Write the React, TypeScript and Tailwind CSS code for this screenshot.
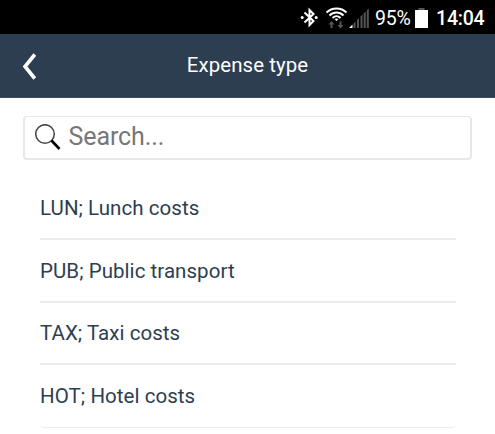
import { useState } from 'react';

interface ExpenseType {
  code: string;
  name: string;
  rowClass: string;
}

const expenseTypes: ExpenseType[] = [
  { code: 'LUN', name: 'Lunch costs', rowClass: 'h-[63px] border-b-2 pt-px' },
  { code: 'PUB', name: 'Public transport', rowClass: 'h-[63px] border-b-2 pt-px' },
  { code: 'TAX', name: 'Taxi costs', rowClass: 'h-[62px] border-b-2' },
  { code: 'HOT', name: 'Hotel costs', rowClass: 'h-[63px] border-b rounded-b-sm' },
];

function StatusBar() {
  return (
    <div className="flex h-[34px] items-center bg-black pt-[2px] pl-[300px] text-white">
      <svg className="h-[22px] w-[19px] shrink-0" viewBox="0 0 19 22" fill="none" stroke="white" strokeWidth="2">
        <path d="M4.5 5.5L13.5 14L9.5 18V3L13.5 7L4.5 15.5" />
        <circle cx="2.2" cy="10.5" r="1.5" fill="white" stroke="none" />
        <circle cx="16.2" cy="10.5" r="1.5" fill="white" stroke="none" />
      </svg>
      <svg className="ml-[6px] h-[24px] w-[23px] shrink-0" viewBox="0 0 23 24" fill="none">
        <path d="M1.5 6.5C7 1 16 1 21.5 6.5" stroke="white" strokeWidth="2" />
        <path d="M4.5 9.5C8.5 5.5 14.5 5.5 18.5 9.5" stroke="white" strokeWidth="2" />
        <path d="M7.5 12C10 9.5 13 9.5 15.5 12" stroke="white" strokeWidth="2" />
        <path d="M9.5 13Q11.5 11.8 13.5 13L11.5 15Z" fill="white" />
        <path d="M6.5 22V17M15.5 15.5V20" stroke="#555" strokeWidth="2" />
        <path d="M3.5 18.5L6.5 15L9.5 18.5ZM12.5 19L15.5 22.5L18.5 19Z" fill="#555" />
      </svg>
      <svg className="ml-[1px] h-[22px] w-[20px] shrink-0" viewBox="0 0 20 22">
        <path d="M0 21L3.5 17.5V21Z" fill="white" />
        <path d="M4.5 21V16.5L6.5 14.5V21ZM8 21V13L10 11V21ZM11.5 21V9.5L13.5 7.5V21ZM14.7 21V6.5L16.7 4.5V21ZM17.8 21V3.5L19.8 1.5V21Z" fill="#555" />
      </svg>
      <span className="ml-[6px] w-[36px] pt-px text-[19.5px] leading-6 tracking-[-0.2px] whitespace-nowrap">95%</span>
      <svg className="ml-[4px] h-[20px] w-[13px] shrink-0" viewBox="0 0 13 20">
        <path d="M3.5 0H9.5V2H3.5Z" fill="#555" />
        <path d="M0 2H13V20H0Z" fill="white" />
      </svg>
      <span className="ml-[8px] pt-px text-[19.5px] leading-6 font-medium tracking-[-0.2px] whitespace-nowrap">14:04</span>
    </div>
  );
}

export default function App() {
  const [query, setQuery] = useState('');

  const visibleTypes = expenseTypes.filter((type) =>
    `${type.code}; ${type.name}`.toLowerCase().includes(query.toLowerCase())
  );

  return (
    <div className="h-[434px] w-[495px] overflow-hidden bg-white font-['Roboto',sans-serif] text-[#2d3e50]">
      <StatusBar />

      <header className="grid h-16 grid-cols-[60px_1fr_60px] items-center border-b border-[#3d4c5e] bg-[#2d3e50] text-white">
        <button className="pl-[22px]" aria-label="Back">
          <svg className="h-[30px] w-[16px]" viewBox="0 0 16 30" fill="none" stroke="white" strokeWidth="3.6">
            <path d="M12.8 3.5L3 15.5L12.8 27.5" />
          </svg>
        </button>
        <h1 className="pb-px text-center text-[20.4px] tracking-[0.1px]">Expense type</h1>
      </header>

      <label className="mt-[18px] mr-[23px] ml-[23px] flex h-[44px] items-center rounded border-2 border-t border-[#e8e8e8] pl-[10px]">
        <svg className="h-[27px] w-[26px] shrink-0" viewBox="0 0 26 27" fill="none">
          <circle cx="10" cy="10" r="9.3" stroke="#444" strokeWidth="1.5" />
          <path d="M16.5 16.5L24.5 25" stroke="black" strokeWidth="2.6" />
        </svg>
        <input
          className="ml-[7.5px] w-full pb-px text-[25px] leading-8 tracking-[-0.1px] outline-none placeholder:text-[#777]"
          placeholder="Search..."
          value={query}
          onChange={(e) => setQuery(e.target.value)}
        />
      </label>

      <ul className="mr-[39px] ml-[40px] pt-[17px]">
        {visibleTypes.map((type) => (
          <li key={type.code} className={`flex items-center border-[#ececec] text-[20.5px] tracking-[0.05px] ${type.rowClass}`}>
            {type.code}; {type.name}
          </li>
        ))}
      </ul>
    </div>
  );
}
